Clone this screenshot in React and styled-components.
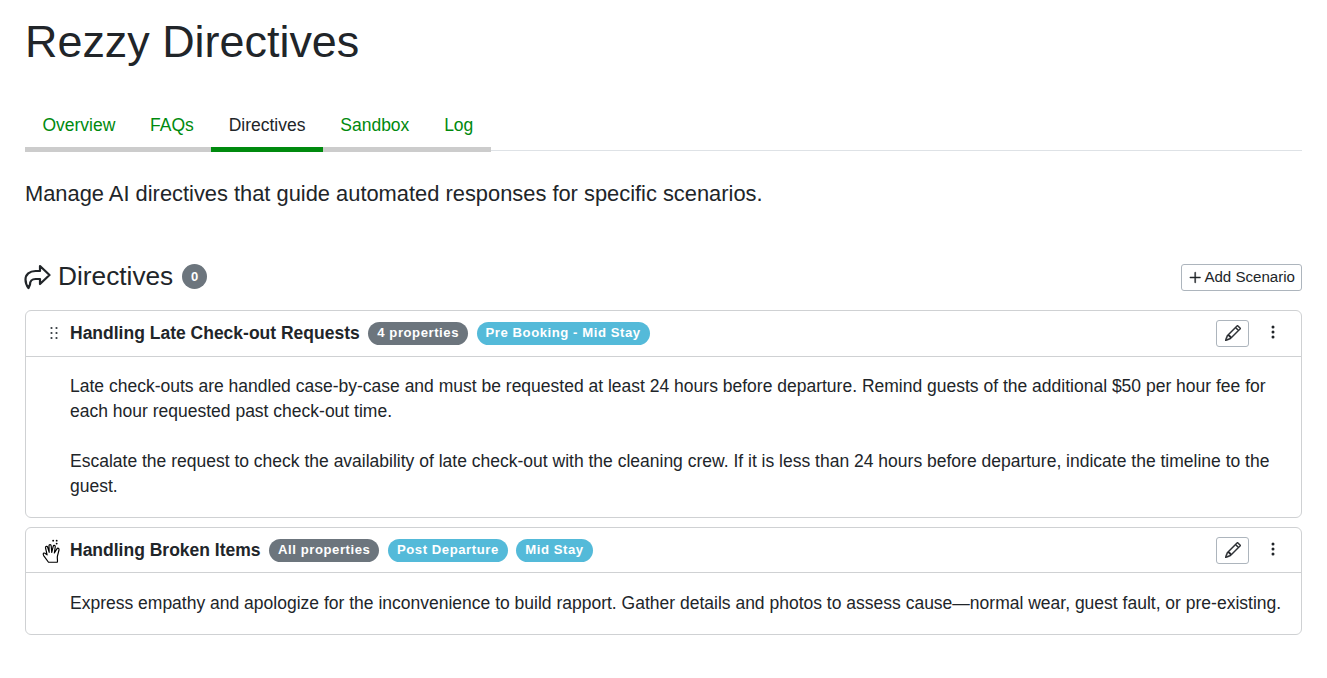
import React from "react";
import styled, { createGlobalStyle } from "styled-components";
import { BsPencil, BsThreeDotsVertical, BsPlusLg } from "react-icons/bs";

const Global = createGlobalStyle`
  html, body { margin: 0; padding: 0; background: #fff; }
  body { font-family: "Liberation Sans", Arial, sans-serif; color: #212529; font-size: 17.5px; line-height: 1.5; }
  * { box-sizing: border-box; }
`;
const Page = styled.div`padding: 15px 25px 0; `;
const Title = styled.h1`margin: 0; font-size: 44.9px; font-weight: 400; line-height: 54px;`;
const Tabs = styled.nav`display: flex; margin-top: 33px; height: 49px; border-bottom: 1px solid #dee2e6;`;
const Tab = styled.a`
  height: 50px; padding: 11px 17.4px 0; font-size: 17.5px; line-height: 25px;
  border-bottom: 5px solid ${p => (p.$active ? "#008a0e" : "#cccccc")};
  color: ${p => (p.$active ? "#212529" : "#008a0e")};
`;
const Lead = styled.p`margin: 28px 0 0; font-size: 21.875px; line-height: 30px;`;
const SectionHead = styled.div`display: flex; align-items: center; justify-content: space-between; margin: 55px 0 19px; height: 27px;`;
const SectionTitle = styled.h2`display: flex; align-items: center; margin: 0; padding-bottom: 2px; font-size: 26.25px; font-weight: 400; line-height: 27px;`;
const ForwardSvg = styled.svg`width: 27px; height: 26px; margin: 0 7px 0 -1px; fill: none; stroke: #212529; stroke-width: 2.2; stroke-linejoin: round; stroke-linecap: round;`;
const CountBadge = styled.span`
  display: inline-flex; align-items: center; justify-content: center; width: 25px; height: 25px; margin-left: 9px;
  border-radius: 50%; background: #6c757d; color: #fff; font-size: 13px; font-weight: 700;
`;
const AddButton = styled.button`
  display: flex; align-items: center; gap: 2px; height: 27px; width: 121px; padding: 0 6px 1px;
  font: 400 15.1px/1 "Liberation Sans", Arial, sans-serif; color: #212529; background: #fff;
  border: 1px solid #adb5bd; border-radius: 3px; white-space: nowrap;
`;
const PlusIcon = styled(BsPlusLg)`width: 15px; height: 15px; stroke: currentColor; stroke-width: 0.6;`;
const Cards = styled.div`display: flex; flex-direction: column; gap: 9px;`;
const Card = styled.section`border: 1px solid #cfd1d3; border-radius: 6px; background: #fff;`;
const CardHeader = styled.header`
  display: flex; align-items: center; height: 45.5px; padding: 0 20px 0 20px; border-bottom: 1px solid #cfd1d3;
`;
const GripSlot = styled.span`display: flex; justify-content: center; width: 16px; margin-right: 8px; color: #343a40;`;
const CardTitle = styled.h3`margin: 0 8.5px 0 0; font-size: 17.5px; font-weight: 700; line-height: 24px; white-space: nowrap;`;
const Pill = styled.span`
  display: inline-flex; align-items: center; height: 23px; padding: 0 9px; margin-right: 8.5px; border-radius: 12px;
  font-size: 13.125px; font-weight: 700; letter-spacing: 0.56px; color: #fff; background: ${p => (p.$info ? "#54bad9" : "#6c757d")};
`;
const Actions = styled.div`display: flex; align-items: center; margin-left: auto;`;
const EditButton = styled.button`
  display: flex; align-items: center; justify-content: center; width: 33px; height: 27px; padding: 0; background: #fff;
  border: 1px solid #adb5bd; border-radius: 3px; color: #212529;
`;
const PencilIcon = styled(BsPencil)`width: 16px; height: 16px; stroke: currentColor; stroke-width: 0.5;`;
const MoreButton = styled.button`
  display: flex; align-items: center; justify-content: center; width: 16px; height: 27px; margin-left: 16px; padding: 0 0 2px;
  border: 0; background: none; color: #212529;
`;
const CardBody = styled.div`padding: 17.4px 16px 18px 44px; font-size: 17.5px; line-height: 25px;`;
const Para = styled.p`margin: 0 0 25px; &:last-child { margin-bottom: 0; }`;
const HandSvg = styled.svg`flex: none; width: 22px; height: 28px; margin-right: 4px; fill: #fff; stroke: #000; stroke-width: 1; stroke-linejoin: round;`;

const ForwardArrow = () => (
  <ForwardSvg viewBox="0 0 27 26" aria-hidden="true">
    <path d="M16 2 L25.5 11 L16 20 V15 H11.5 C8 15 6 17.5 6 20.5 L4.5 24 C2.5 21.5 1.5 18.5 1.5 15.5 C1.5 10.5 5.5 7 11.5 7 H16 Z" />
  </ForwardSvg>
);

const GripDots = () => (
  <svg width="10" height="14" viewBox="0 0 10 14" fill="#343a40" aria-hidden="true">
    {[2, 7, 12].map(y => [2.5, 7.5].map(x => <circle key={`${x}-${y}`} cx={x} cy={y} r="1.1" />))}
  </svg>
);

const HandCursor = () => (
  <HandSvg viewBox="0 0 18 24" aria-hidden="true">
    <path d="M6 22.5 L2 17 C1 15.5 1.5 14 3 14.8 L4.8 16.2 L3.4 10 C3.2 8.7 5 8.4 5.3 9.7 L6.6 14 L6.4 8.4 C6.4 7 8.2 7 8.3 8.4 L8.8 14 L10 8.8 C10.3 7.5 12 7.9 11.8 9.2 L11 14.6 L13.2 11 C13.9 10 15.4 10.6 15 12 L13.6 17.5 C13.3 19.5 14 20.5 13.6 22.5 Z" />
    <circle cx="10" cy="4" r="0.8" fill="#000" stroke="none" />
    <circle cx="13" cy="4" r="0.8" fill="#000" stroke="none" />
    <circle cx="13" cy="6.5" r="0.8" fill="#000" stroke="none" />
  </HandSvg>
);

const Row = ({ handle, title, pills, children }) => (
  <Card>
    <CardHeader>
      <GripSlot>{handle}</GripSlot>
      <CardTitle>{title}</CardTitle>
      {pills.map(p => <Pill key={p.t} $info={p.info}>{p.t}</Pill>)}
      <Actions>
        <EditButton aria-label="Edit"><PencilIcon /></EditButton>
        <MoreButton aria-label="More"><BsThreeDotsVertical size={18} /></MoreButton>
      </Actions>
    </CardHeader>
    <CardBody>{children}</CardBody>
  </Card>
);

export default function App() {
  return (
    <>
      <Global />
      <Page>
        <Title>Rezzy Directives</Title>
        <Tabs>
          <Tab>Overview</Tab><Tab>FAQs</Tab><Tab $active>Directives</Tab><Tab>Sandbox</Tab><Tab>Log</Tab>
        </Tabs>
        <Lead>Manage AI directives that guide automated responses for specific scenarios.</Lead>
        <SectionHead>
          <SectionTitle><ForwardArrow />Directives<CountBadge>0</CountBadge></SectionTitle>
          <AddButton><PlusIcon />Add Scenario</AddButton>
        </SectionHead>
        <Cards>
          <Row handle={<GripDots />} title="Handling Late Check-out Requests"
            pills={[{ t: "4 properties" }, { t: "Pre Booking - Mid Stay", info: true }]}>
            <Para>Late check-outs are handled case-by-case and must be requested at least 24 hours before departure. Remind guests of the additional $50 per hour fee for each hour requested past check-out time.</Para>
            <Para>Escalate the request to check the availability of late check-out with the cleaning crew. If it is less than 24 hours before departure, indicate the timeline to the guest.</Para>
          </Row>
          <Row handle={<HandCursor />} title="Handling Broken Items"
            pills={[{ t: "All properties" }, { t: "Post Departure", info: true }, { t: "Mid Stay", info: true }]}>
            <Para>Express empathy and apologize for the inconvenience to build rapport. Gather details and photos to assess cause—normal wear, guest fault, or pre-existing.</Para>
          </Row>
        </Cards>
      </Page>
    </>
  );
}
